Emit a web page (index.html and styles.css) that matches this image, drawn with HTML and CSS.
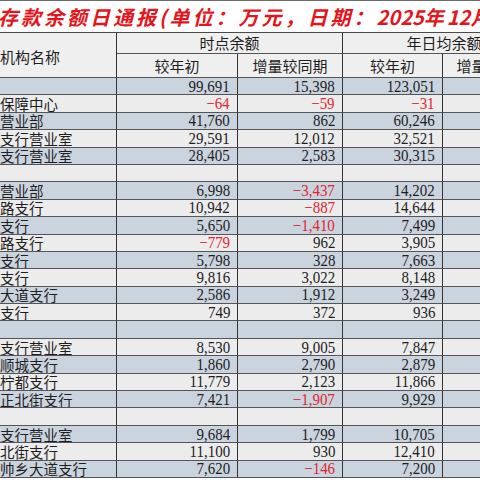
FILE: index.html
```html
<!DOCTYPE html>
<html lang="zh-CN">
<head>
<meta charset="utf-8">
<title>存款余额日通报</title>
<link rel="stylesheet" href="styles.css">
</head>
<body>
<div class="page">
  <div class="title">存款余额日通报(单位：万元，日期：<span class="digits">2025</span>年<span class="digits">12</span>月</div>
  <div class="sheet">
    <div class="hd hd-name">机构名称</div>
    <div class="hd hd-grp">时点余额</div>
    <div class="hd hd-grp">年日均余额</div>
    <div class="hd">较年初</div>
    <div class="hd">增量较同期</div>
    <div class="hd">较年初</div>
    <div class="hd">增量较同期</div>

    <div class="row b"><div class="nm"></div><div class="n"><span>99,691</span></div><div class="n"><span>15,398</span></div><div class="n"><span>123,051</span></div><div class="n"></div></div>
    <div class="row l"><div class="nm">保障中心</div><div class="n neg"><span>−64</span></div><div class="n neg"><span>−59</span></div><div class="n neg"><span>−31</span></div><div class="n"></div></div>
    <div class="row b"><div class="nm">营业部</div><div class="n"><span>41,760</span></div><div class="n"><span>862</span></div><div class="n"><span>60,246</span></div><div class="n"></div></div>
    <div class="row l"><div class="nm">支行营业室</div><div class="n"><span>29,591</span></div><div class="n"><span>12,012</span></div><div class="n"><span>32,521</span></div><div class="n"></div></div>
    <div class="row b"><div class="nm">支行营业室</div><div class="n"><span>28,405</span></div><div class="n"><span>2,583</span></div><div class="n"><span>30,315</span></div><div class="n"></div></div>
    <div class="row l"><div class="nm"></div><div class="n"></div><div class="n"></div><div class="n"></div><div class="n"></div></div>
    <div class="row b"><div class="nm">营业部</div><div class="n"><span>6,998</span></div><div class="n neg"><span>−3,437</span></div><div class="n"><span>14,202</span></div><div class="n"></div></div>
    <div class="row l"><div class="nm">路支行</div><div class="n"><span>10,942</span></div><div class="n neg"><span>−887</span></div><div class="n"><span>14,644</span></div><div class="n"></div></div>
    <div class="row b"><div class="nm">支行</div><div class="n"><span>5,650</span></div><div class="n neg"><span>−1,410</span></div><div class="n"><span>7,499</span></div><div class="n"></div></div>
    <div class="row l"><div class="nm">路支行</div><div class="n neg"><span>−779</span></div><div class="n"><span>962</span></div><div class="n"><span>3,905</span></div><div class="n"></div></div>
    <div class="row b"><div class="nm">支行</div><div class="n"><span>5,798</span></div><div class="n"><span>328</span></div><div class="n"><span>7,663</span></div><div class="n"></div></div>
    <div class="row l"><div class="nm">支行</div><div class="n"><span>9,816</span></div><div class="n"><span>3,022</span></div><div class="n"><span>8,148</span></div><div class="n"></div></div>
    <div class="row b"><div class="nm">大道支行</div><div class="n"><span>2,586</span></div><div class="n"><span>1,912</span></div><div class="n"><span>3,249</span></div><div class="n"></div></div>
    <div class="row l"><div class="nm">支行</div><div class="n"><span>749</span></div><div class="n"><span>372</span></div><div class="n"><span>936</span></div><div class="n"></div></div>
    <div class="row b"><div class="nm"></div><div class="n"></div><div class="n"></div><div class="n"></div><div class="n"></div></div>
    <div class="row l"><div class="nm">支行营业室</div><div class="n"><span>8,530</span></div><div class="n"><span>9,005</span></div><div class="n"><span>7,847</span></div><div class="n"></div></div>
    <div class="row b"><div class="nm">顺城支行</div><div class="n"><span>1,860</span></div><div class="n"><span>2,790</span></div><div class="n"><span>2,879</span></div><div class="n"></div></div>
    <div class="row l"><div class="nm">柠都支行</div><div class="n"><span>11,779</span></div><div class="n"><span>2,123</span></div><div class="n"><span>11,866</span></div><div class="n"></div></div>
    <div class="row b"><div class="nm">正北街支行</div><div class="n"><span>7,421</span></div><div class="n neg"><span>−1,907</span></div><div class="n"><span>9,929</span></div><div class="n"></div></div>
    <div class="row l"><div class="nm"></div><div class="n"></div><div class="n"></div><div class="n"></div><div class="n"></div></div>
    <div class="row b"><div class="nm">支行营业室</div><div class="n"><span>9,684</span></div><div class="n"><span>1,799</span></div><div class="n"><span>10,705</span></div><div class="n"></div></div>
    <div class="row l"><div class="nm">北街支行</div><div class="n"><span>11,100</span></div><div class="n"><span>930</span></div><div class="n"><span>12,410</span></div><div class="n"></div></div>
    <div class="row b"><div class="nm">帅乡大道支行</div><div class="n"><span>7,620</span></div><div class="n neg"><span>−146</span></div><div class="n"><span>7,200</span></div><div class="n"></div></div>
  </div>
</div>
</body>
</html>
```

FILE: styles.css
```css
html, body {
  margin: 0;
  padding: 0;
  background: #ffffff;
}

.page {
  width: 480px;
  height: 480px;
  overflow: hidden;
  background: #ffffff;
}

.title {
  box-sizing: border-box;
  height: 33px;
  border-top: 1px solid #6a6a6a;
  border-bottom: 1px solid #4a4a4a;
  margin-left: -2px;
  font-family: "Noto Sans CJK SC", sans-serif;
  font-weight: 700;
  font-style: italic;
  font-size: 20px;
  letter-spacing: 3px;
  line-height: 31px;
  color: #e4151c;
  white-space: nowrap;
  overflow: hidden;
}

.title .digits {
  letter-spacing: 0;
}

.sheet {
  width: 546px;
  display: grid;
  grid-template-columns: 117px 121px 105px 100px 103px;
  grid-template-rows: 21px 24px repeat(23, 17.4px);
  color: #1e1e1e;
}

.sheet > div:not(.row),
.row > div {
  box-sizing: border-box;
  border-right: 1px solid #333333;
  border-bottom: 1px solid #555555;
  overflow: hidden;
  white-space: nowrap;
}

.row {
  display: contents;
}

.hd {
  background: #efefef;
  font-family: "Noto Sans CJK SC", sans-serif;
  font-size: 15px;
  display: flex;
  align-items: center;
  justify-content: center;
  line-height: 16px;
}

.hd-name {
  grid-row: span 2;
  justify-content: flex-start;
  padding-top: 4px;
}

.hd-grp {
  grid-column: span 2;
}

.row.b > div {
  background: #cad4df;
}

.row.l > div {
  background: #ececec;
}

.nm {
  font-family: "Noto Sans CJK SC", sans-serif;
  font-size: 14.5px;
  line-height: 15px;
  display: flex;
  align-items: center;
}

.n {
  font-family: "Liberation Serif", serif;
  font-size: 17px;
  line-height: 15px;
  text-align: right;
  padding-right: 7px;
  display: flex;
  align-items: center;
  justify-content: flex-end;
}

.n span {
  display: inline-block;
  transform: scaleX(0.88);
  transform-origin: right center;
}

.n.neg {
  color: #e0262f;
}
```
